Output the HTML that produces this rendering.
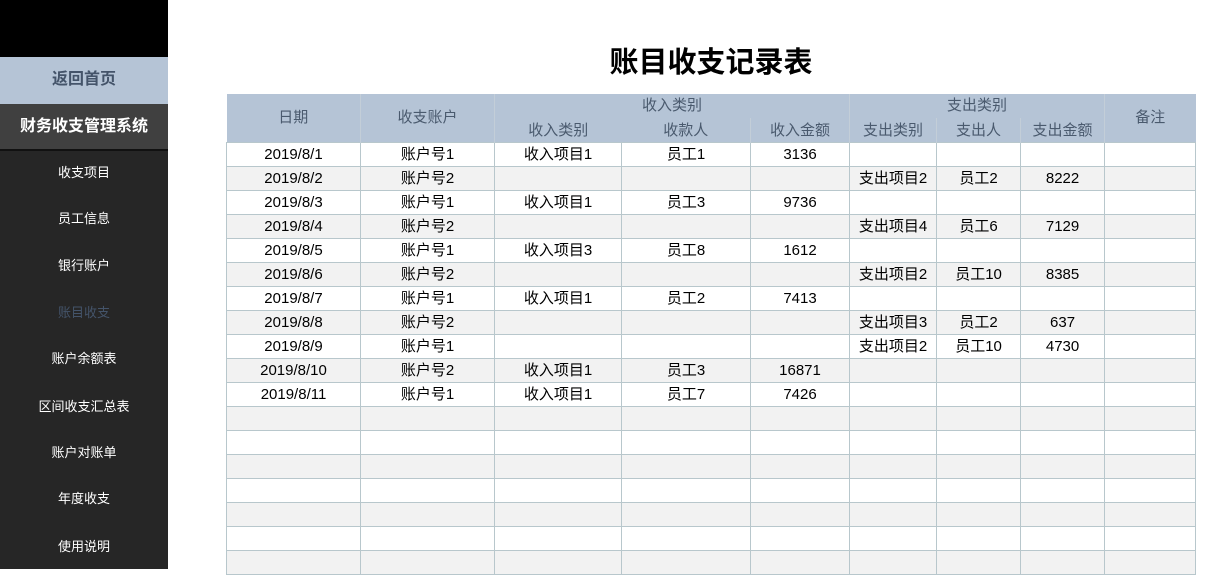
<!DOCTYPE html>
<html><head><meta charset="utf-8"><style>
*{margin:0;padding:0;box-sizing:border-box}
body{width:1210px;height:569px;overflow:hidden;background:#fff;font-family:"Liberation Sans","Noto Sans CJK SC",sans-serif;position:relative}
#sb{position:absolute;left:0;top:0;width:168px;height:569px;background:#262626}
#blk{position:absolute;left:0;top:0;width:168px;height:57px;background:#000}
#home{position:absolute;left:0;top:57px;width:168px;height:47px;background:#b5c4d6;color:#44546a;font-size:16px;font-weight:bold;text-align:center;line-height:45px}
#sys{position:absolute;left:0;top:104px;width:168px;height:47px;background:#404040;color:#fff;font-size:16px;font-weight:bold;text-align:center;line-height:45px;border-bottom:2px solid #111}
.it{position:absolute;left:0;width:168px;text-align:center;color:#fff;font-size:13px;line-height:20px}
#title{position:absolute;left:226px;width:970px;top:43px;text-align:center;font-size:29px;font-weight:bold;line-height:40px}
table{position:absolute;left:226px;top:94px;border-collapse:collapse;table-layout:fixed;width:969px}
td{border:1px solid #b8c7cc;height:24px;text-align:center;font-size:15px;line-height:22px;padding:0;white-space:nowrap}
th{background:#b5c4d6;color:#4a5a6e;font-weight:normal;font-size:15px;height:24px;border-left:1px solid #c3ced8;padding:0;line-height:22px}
tbody tr:nth-child(even) td{background:#f2f2f2}
</style></head><body>
<div id="sb"></div><div id="blk"></div>
<div id="home">返回首页</div>
<div id="sys">财务收支管理系统</div>
<div class="it" style="top:163px">收支项目</div>
<div class="it" style="top:209px">员工信息</div>
<div class="it" style="top:256px">银行账户</div>
<div class="it" style="top:303px;color:#44546a">账目收支</div>
<div class="it" style="top:349px">账户余额表</div>
<div class="it" style="top:397px">区间收支汇总表</div>
<div class="it" style="top:443px">账户对账单</div>
<div class="it" style="top:489px">年度收支</div>
<div class="it" style="top:537px">使用说明</div>
<div id="title">账目收支记录表</div>
<table>
<colgroup><col style="width:134px"><col style="width:134px"><col style="width:127px"><col style="width:129px"><col style="width:99px"><col style="width:87px"><col style="width:84px"><col style="width:84px"><col style="width:91px"></colgroup>
<thead>
<tr><th rowspan="2" style="border-left:none">日期</th><th rowspan="2">收支账户</th><th colspan="3">收入类别</th><th colspan="3">支出类别</th><th rowspan="2">备注</th></tr>
<tr><th style="padding-top:2px">收入类别</th><th style="border-left:none;padding-top:2px">收款人</th><th style="padding-top:2px">收入金额</th><th style="padding-top:2px">支出类别</th><th style="padding-top:2px">支出人</th><th style="padding-top:2px">支出金额</th></tr>
</thead>
<tbody>
<tr><td>2019/8/1</td><td>账户号1</td><td>收入项目1</td><td>员工1</td><td>3136</td><td></td><td></td><td></td><td></td></tr>
<tr><td>2019/8/2</td><td>账户号2</td><td></td><td></td><td></td><td>支出项目2</td><td>员工2</td><td>8222</td><td></td></tr>
<tr><td>2019/8/3</td><td>账户号1</td><td>收入项目1</td><td>员工3</td><td>9736</td><td></td><td></td><td></td><td></td></tr>
<tr><td>2019/8/4</td><td>账户号2</td><td></td><td></td><td></td><td>支出项目4</td><td>员工6</td><td>7129</td><td></td></tr>
<tr><td>2019/8/5</td><td>账户号1</td><td>收入项目3</td><td>员工8</td><td>1612</td><td></td><td></td><td></td><td></td></tr>
<tr><td>2019/8/6</td><td>账户号2</td><td></td><td></td><td></td><td>支出项目2</td><td>员工10</td><td>8385</td><td></td></tr>
<tr><td>2019/8/7</td><td>账户号1</td><td>收入项目1</td><td>员工2</td><td>7413</td><td></td><td></td><td></td><td></td></tr>
<tr><td>2019/8/8</td><td>账户号2</td><td></td><td></td><td></td><td>支出项目3</td><td>员工2</td><td>637</td><td></td></tr>
<tr><td>2019/8/9</td><td>账户号1</td><td></td><td></td><td></td><td>支出项目2</td><td>员工10</td><td>4730</td><td></td></tr>
<tr><td>2019/8/10</td><td>账户号2</td><td>收入项目1</td><td>员工3</td><td>16871</td><td></td><td></td><td></td><td></td></tr>
<tr><td>2019/8/11</td><td>账户号1</td><td>收入项目1</td><td>员工7</td><td>7426</td><td></td><td></td><td></td><td></td></tr>
<tr><td></td><td></td><td></td><td></td><td></td><td></td><td></td><td></td><td></td></tr>
<tr><td></td><td></td><td></td><td></td><td></td><td></td><td></td><td></td><td></td></tr>
<tr><td></td><td></td><td></td><td></td><td></td><td></td><td></td><td></td><td></td></tr>
<tr><td></td><td></td><td></td><td></td><td></td><td></td><td></td><td></td><td></td></tr>
<tr><td></td><td></td><td></td><td></td><td></td><td></td><td></td><td></td><td></td></tr>
<tr><td></td><td></td><td></td><td></td><td></td><td></td><td></td><td></td><td></td></tr>
<tr><td></td><td></td><td></td><td></td><td></td><td></td><td></td><td></td><td></td></tr>
</tbody></table>
</body></html>
